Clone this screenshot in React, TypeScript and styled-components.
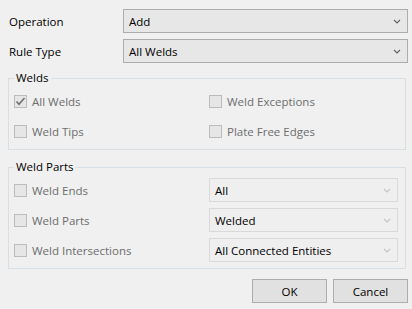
import styled, { createGlobalStyle } from 'styled-components';

const GlobalStyle = createGlobalStyle`
  html, body {
    margin: 0;
    padding: 0;
    background: #f0f0f0;
  }
  body {
    font-family: 'Open Sans', 'Noto Sans', sans-serif;
    font-size: 11.5px;
    color: #000;
  }
`;

function Chevron({ disabled }: { disabled?: boolean }) {
  return (
    <svg width="8" height="5" viewBox="0 0 8 5">
      <path
        d="M1 1 L4 4 L7 1"
        fill="none"
        stroke={disabled ? '#c4c4c4' : '#606060'}
        strokeWidth="1.1"
      />
    </svg>
  );
}

function Combo({ value, disabled }: { value: string; disabled?: boolean }) {
  return (
    <ComboBox $disabled={disabled}>
      <span>{value}</span>
      <Chevron disabled={disabled} />
    </ComboBox>
  );
}

function Check({ label, checked }: { label: string; checked?: boolean }) {
  return (
    <CheckRow>
      <CheckBox>
        {checked && (
          <svg width="11" height="11" viewBox="0 0 11 11">
            <path d="M1.5 5.5 L4 8.2 L9.5 2" fill="none" stroke="#707070" strokeWidth="1.6" />
          </svg>
        )}
      </CheckBox>
      <CheckLabel>{label}</CheckLabel>
    </CheckRow>
  );
}

export default function App() {
  return (
    <>
      <GlobalStyle />
      <Dialog>
        <FormGrid>
          <FieldLabel>Operation</FieldLabel>
          <Combo value="Add" />
          <FieldLabel>Rule Type</FieldLabel>
          <Combo value="All Welds" />
        </FormGrid>

        <GroupBox>
          <GroupTitle>Welds</GroupTitle>
          <GroupGrid>
            <Check label="All Welds" checked />
            <Check label="Weld Exceptions" />
            <Check label="Weld Tips" />
            <Check label="Plate Free Edges" />
          </GroupGrid>
        </GroupBox>

        <GroupBox $gapTop>
          <GroupTitle>Weld Parts</GroupTitle>
          <GroupGrid>
            <Check label="Weld Ends" />
            <Combo value="All" disabled />
            <Check label="Weld Parts" />
            <Combo value="Welded" disabled />
            <Check label="Weld Intersections" />
            <Combo value="All Connected Entities" disabled />
          </GroupGrid>
        </GroupBox>

        <ButtonBar>
          <Button>OK</Button>
          <Button>Cancel</Button>
        </ButtonBar>
      </Dialog>
    </>
  );
}

const Dialog = styled.div`
  display: flex;
  flex-direction: column;
  width: 412px;
  height: 309px;
  box-sizing: border-box;
  padding: 9px 4px 0 8px;
`;

const FormGrid = styled.div`
  display: grid;
  grid-template-columns: 115px 1fr;
  row-gap: 6px;
  align-items: center;
`;

const FieldLabel = styled.div`
  padding-left: 1px;
`;

const ComboBox = styled.div<{ $disabled?: boolean }>`
  display: flex;
  align-items: center;
  justify-content: space-between;
  height: 24px;
  box-sizing: border-box;
  padding: 0 6px 0 5px;
  border: 1px solid ${({ $disabled }) => ($disabled ? '#d9d9d9' : '#acacac')};
  background: ${({ $disabled }) => ($disabled ? '#efefef' : '#e7e7e7')};
  color: #000;
`;

const GroupBox = styled.fieldset<{ $gapTop?: boolean }>`
  margin: ${({ $gapTop }) => ($gapTop ? '9px' : '7px')} 2px 0 0;
  padding: 0 7px 3px 5px;
  min-width: 0;
  border: 1px solid #d5dfe5;
`;

const GroupTitle = styled.legend`
  margin-left: 0;
  padding: 0 2px;
  line-height: 16px;
  color: #000;
`;

const GroupGrid = styled.div`
  display: grid;
  grid-template-columns: 195px 1fr;
  grid-auto-rows: 30px;
  align-items: center;
`;

const CheckRow = styled.div`
  display: flex;
  align-items: center;
  gap: 5px;
`;

const CheckBox = styled.span`
  display: flex;
  align-items: center;
  justify-content: center;
  width: 13px;
  height: 13px;
  box-sizing: border-box;
  border: 1px solid #bcbcbc;
  background: #e6e6e6;
`;

const CheckLabel = styled.span`
  color: #6d6d6d;
`;

const ButtonBar = styled.div`
  display: flex;
  justify-content: flex-end;
  gap: 6px;
  margin-top: 10px;
`;

const Button = styled.div`
  display: flex;
  align-items: center;
  justify-content: center;
  width: 75px;
  height: 24px;
  box-sizing: border-box;
  border: 1px solid #adadad;
  background: #e1e1e1;
  color: #000;
`;
